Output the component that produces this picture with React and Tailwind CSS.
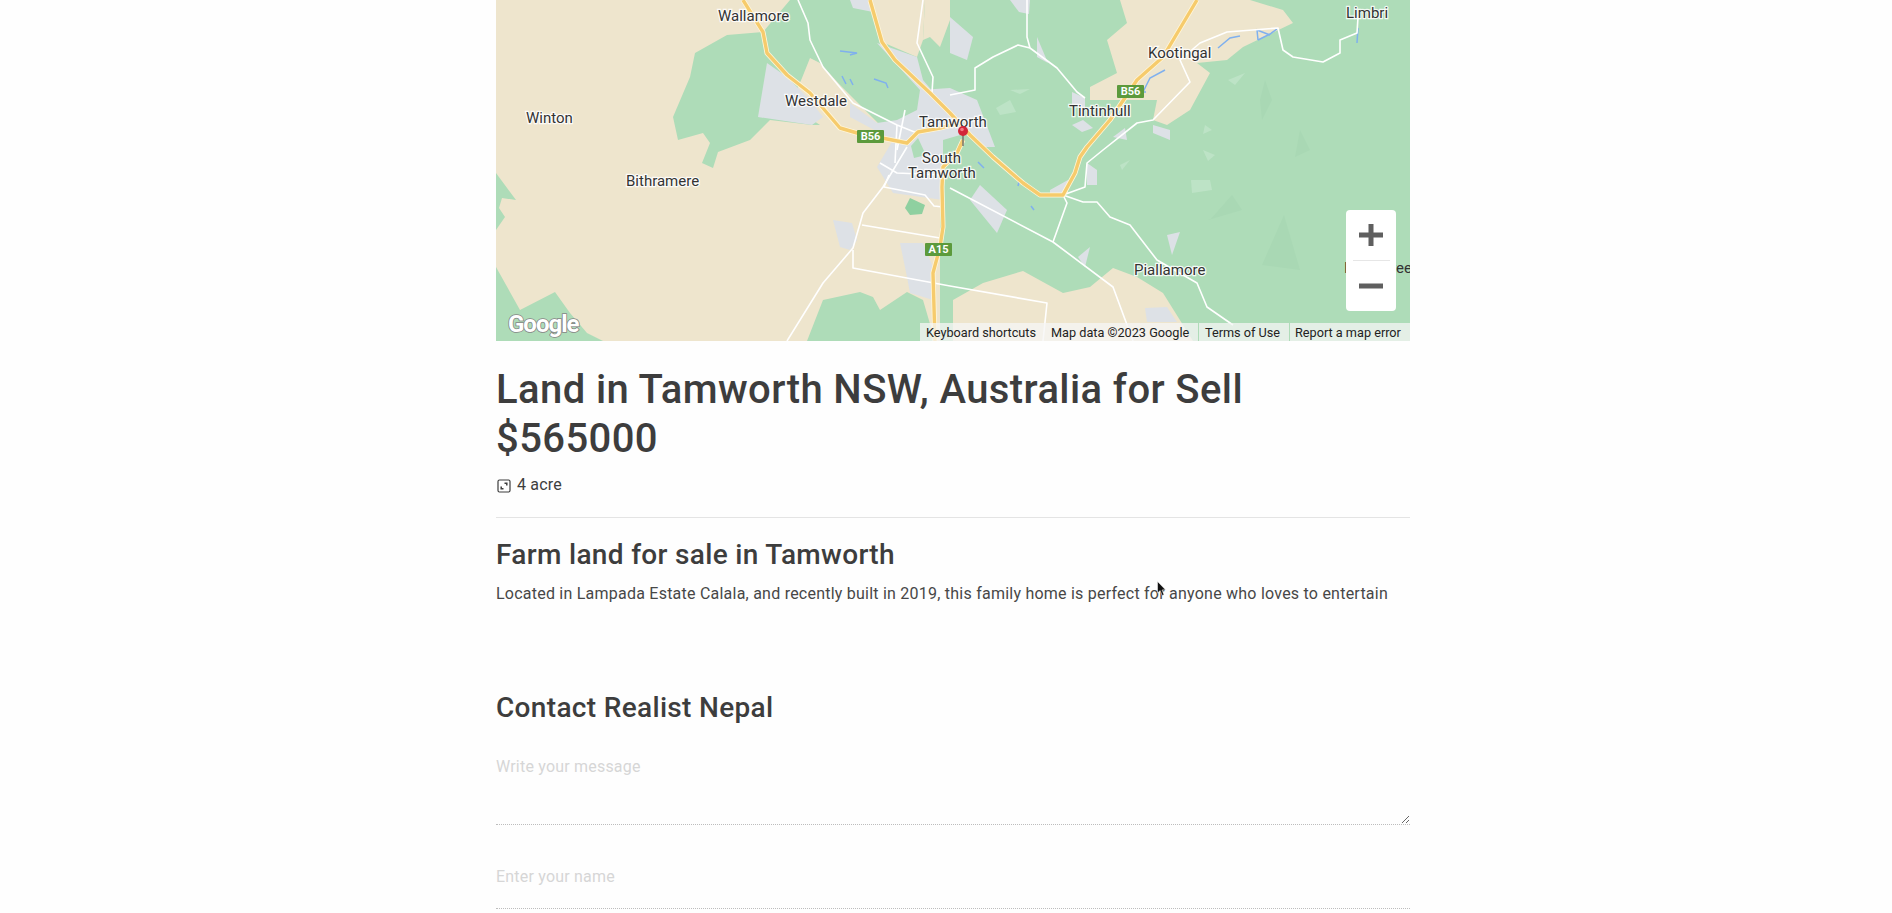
import React from 'react';

const FONT = { fontFamily: 'Roboto, sans-serif' };

const GREEN = [
  '790,0 763,32 727,35 695,53 690,77 673,117 678,140 703,133 710,143 702,163 713,168 718,152 750,140 770,120 812,125 897,125 940,130 940,341 1410,341 1410,0',
  '496,173 516,200 502,198 499,208 505,217 496,230',
  '496,267 520,310 555,292 570,313 587,333 603,341 496,341',
  '807,341 823,300 860,292 873,297 880,310 907,292 923,300 935,341',
];

const TAN = [
  '802,78 810,58 820,63 840,85 865,110 880,125 820,125 790,105',
  '870,0 882,42 917,57 923,40 925,0',
  '925,0 923,40 930,37 940,47 950,20 950,0',
  '1120,0 1127,23 1107,40 1117,73 1090,87 1090,100 1157,100 1153,120 1167,125 1190,110 1210,73 1197,63 1227,60 1243,47 1293,23 1283,10 1250,0',
  '953,341 953,300 983,283 1023,271 1063,293 1090,287 1113,268 1137,277 1163,293 1193,341',
];

const URBAN = [
  '850,103 877,123 897,120 917,110 920,90 950,88 977,100 995,147 983,147 967,133 943,140 943,200 893,193 877,167 893,140 850,117',
  '767,63 758,117 812,125 823,117 810,100 787,77',
  '833,220 852,223 857,240 850,250 840,247',
  '900,243 923,243 933,267 933,300 910,293 907,277',
  '850,0 870,0 873,12 853,8',
  '877,43 917,57 923,80 940,100 920,90',
  '950,17 973,37 967,60 950,53',
  '1010,0 1030,0 1029,14 1019,12',
  '970,200 980,185 1007,210 997,233',
  '1087,163 1097,170 1097,185 1087,185',
  '1153,125 1170,130 1170,140 1153,133',
  '1072,92 1085,98 1085,108 1072,105',
  '1072,125 1083,120 1093,128 1082,132',
  '1037,37 1048,63 1037,57',
  '1167,235 1180,232 1172,255',
  '1078,257 1090,247 1085,267',
  '1145,308 1167,307 1177,322 1147,322',
  '1113,137 1125,128 1127,140',
  '1050,190 1068,180 1068,193 1050,193',
];

const PALE = [
  '1010,90 1030,89 1020,94',
  '996,108 1010,100 1016,112 1000,115',
  '1205,125 1212,130 1203,134',
  '1203,150 1215,155 1208,161',
  '1120,165 1130,160 1122,170',
  '1191,180 1210,180 1212,190 1192,193',
  '1228,80 1245,73 1235,85',
];

const DARK = [
  '1265,80 1272,100 1262,120 1260,100',
  '1300,270 1284,215 1262,265',
  '1300,130 1310,150 1295,157',
  '1210,220 1232,195 1242,210 1208,220',
];

const WATER = [
  'M840 51 L857 53 L850 55',
  'M842 76 L846 84 M850 79 L853 85',
  'M874 79 L886 83 L888 88',
  'M1143 92 L1150 78 L1165 70',
  'M1146 92 L1128 92',
  'M1258 40 L1270 34 L1277 29',
  'M1258 40 L1257 30 L1270 35',
  'M1218 48 L1230 38 L1240 36',
  'M1357 43 L1358 28',
  'M1020 178 L1018 186',
  'M1034 210 L1031 206',
  'M978 162 L984 168',
];

const WHITE_ROADS = [
  'M787 341 L823 283 L853 248 L863 213 L883 187 L907 147',
  'M798 0 L808 23 L810 40 L823 67 L853 103 L897 125 L917 133',
  'M862 225 L940 238',
  'M853 250 L853 268 L950 286 L1047 303 L1043 341',
  'M950 188 L1053 242 L1113 287 L1133 341',
  'M1053 242 L1067 203 L1063 195',
  'M1063 195 L1083 202 L1097 202 L1110 217 L1130 225 L1157 260 L1197 283 L1207 307 L1233 325',
  'M1063 195 L1085 187 L1087 163 L1103 150 L1137 123 L1153 120 L1190 82 L1180 60 L1200 43 L1227 32 L1278 28 L1283 50 L1293 57 L1323 62 L1340 53 L1340 40 L1357 33 L1358 17',
  'M1027 0 L1027 37 L1030 48 L1018 45 L993 57 L975 68 L975 90 L950 95',
  'M1030 48 L1057 68 L1077 92 L1085 98',
  'M923 0 L917 43 L933 77 L932 93',
  'M880 163 L897 173 L943 175',
  'M889 175 L884 187 L925 195 L934 206 L943 207',
  'M905 110 L897 150',
  'M897 125 L895 163',
];

const YELLOW_ROADS = [
  'M743 0 L763 32 L767 53 L787 75 L810 93 L840 128 L857 133 L907 143 L918 132 L940 128 L963 122',
  'M870 0 L882 42 L895 60 L930 93 L950 113 L970 135 L993 157 L1023 183 L1040 195 L1063 195 L1075 173 L1080 157 L1087 147 L1110 120 L1137 80 L1163 57 L1197 0',
  'M963 140 L957 153 L943 167 L942 187 L943 227 L940 247 L933 273 L935 341',
];

// labels sit at x, baseline y, all in page coordinates
const LABELS = [
  ['Wallamore', 718, 21],
  ['Westdale', 785, 106],
  ['Winton', 526, 123],
  ['Bithramere', 626, 186],
  ['Tamworth', 919, 127],
  ['South', 922, 163],
  ['Tamworth', 908, 178],
  ['Kootingal', 1148, 58],
  ['Tintinhull', 1069, 116],
  ['Limbri', 1346, 18],
  ['Piallamore', 1134, 275],
];

const SHIELDS = [
  ['B56', 857, 130, 27],
  ['A15', 925, 243, 27],
  ['B56', 1117, 85, 27],
];

const MapArt = () => (
  <svg viewBox="496 0 914 341" className="block w-[914px] h-[341px]" style={FONT}>
    <rect x="496" y="0" width="914" height="341" fill="#eee5cd" />
    {GREEN.map((p) => <polygon key={p} points={p} fill="#aedcb8" />)}
    {TAN.map((p) => <polygon key={p} points={p} fill="#eee5cd" />)}
    {URBAN.map((p) => <polygon key={p} points={p} fill="#dde1e6" />)}
    {PALE.map((p) => <polygon key={p} points={p} fill="#bde3c6" />)}
    {DARK.map((p) => <polygon key={p} points={p} fill="#a9d8b4" />)}
    <polygon points="911,146 918,138 926,155 914,158" fill="#aedcb8" />
    <polygon points="910,198 925,205 922,214 910,215 905,208" fill="#8fd0a0" />
    {WATER.map((d) => <path key={d} d={d} fill="none" stroke="#7fb0ee" strokeWidth="1.5" />)}
    {WHITE_ROADS.map((d) => <path key={d} d={d} fill="none" stroke="#ffffff" strokeWidth="1.6" strokeLinejoin="round" />)}
    {YELLOW_ROADS.map((d) => <path key={d} d={d} fill="none" stroke="#fff6d8" strokeWidth="5" strokeLinejoin="round" />)}
    {YELLOW_ROADS.map((d) => <path key={d} d={d} fill="none" stroke="#f6cb6c" strokeWidth="3.4" strokeLinejoin="round" />)}
    {SHIELDS.map(([t, x, y, w]) => (
      <g key={t + x}>
        <rect x={x} y={y} width={w} height={13} fill="#5c9a3c" rx="1" />
        <text x={x + w / 2} y={y + 10} textAnchor="middle" fontSize="11" fontWeight="700" fill="#ffffff">{t}</text>
      </g>
    ))}
    {LABELS.map(([t, x, y]) => (
      <text key={t + x} x={x} y={y} fontSize="15" fill="#333333" stroke="#ffffff" strokeWidth="2.5" strokeOpacity="0.85" paintOrder="stroke">{t}</text>
    ))}
    <text x="1344" y="273" fontSize="15" fill="#333333">I</text>
    <text x="1391" y="273" fontSize="15" fill="#333333">ree</text>
    <path d="M963 133 L963 146" stroke="#77736c" strokeWidth="1.5" />
    <circle cx="963" cy="131" r="5" fill="#d3263a" />
    <circle cx="962" cy="129.5" r="1.8" fill="#f27a85" />
    <text x="508" y="332" fontSize="24" fontWeight="700" fill="#ffffff" stroke="#858585" strokeWidth="1.6" letterSpacing="-1" paintOrder="stroke">Google</text>
  </svg>
);

const MapFooter = () => (
  <div className="absolute bottom-0 right-0 flex h-[18px] text-[12.7px] leading-[19px] text-[#222]" style={FONT}>
    <span className="w-[116px] pl-[6px] bg-[#f5f5f5]/75 whitespace-nowrap">Keyboard shortcuts</span>
    <span className="w-[162px] pl-[15px] bg-[#f5f5f5]/75 whitespace-nowrap">Map data ©2023 Google</span>
    <span className="w-[90px] ml-px pl-[6px] bg-[#f5f5f5]/75 whitespace-nowrap">Terms of Use</span>
    <span className="w-[120px] ml-px pl-[5px] bg-[#f5f5f5]/75 whitespace-nowrap">Report a map error</span>
  </div>
);

const ZoomControl = () => (
  <div className="absolute left-[850px] top-[210px] w-[50px] h-[101px] bg-white rounded-sm flex flex-col items-center">
    <div className="h-[50px] w-full flex items-center justify-center">
      <svg width="24" height="24" viewBox="0 0 24 24"><path d="M0 12h24M12 1v22" stroke="#5f5f5f" strokeWidth="5" fill="none" /></svg>
    </div>
    <div className="h-px w-[37px] bg-[#e6e6e6]" />
    <div className="h-[50px] w-full flex items-center justify-center">
      <svg width="24" height="24" viewBox="0 0 24 24"><path d="M0 12h24" stroke="#5f5f5f" strokeWidth="5" fill="none" /></svg>
    </div>
  </div>
);

const AreaIcon = () => (
  <svg width="14" height="14" viewBox="0 0 14 14" fill="none" stroke="#3d3d3d" className="shrink-0 ml-px mt-px">
    <rect x="1" y="1" width="12" height="12" rx="1.5" strokeWidth="1.2" />
    <path d="M4.2 7.5v2.3h2.3M9.8 6.5V4.2H7.5" strokeWidth="1.5" />
  </svg>
);

const App = () => {
  return (
    <div className="h-screen overflow-hidden bg-[#fefefe] text-[#3d3d3d] relative" style={FONT}>
      <div className="w-[914px] ml-[496px]">
        <div className="relative h-[341px] overflow-hidden">
          <MapArt />
          <MapFooter />
          <ZoomControl />
        </div>

        <h1 className="mt-[25px] text-[40px] leading-[48.5px] font-medium tracking-[0.4px]">
          Land in Tamworth NSW, Australia for Sell
          <br />
          $565000
        </h1>
        <div className="mt-[10px] flex items-center gap-[6px] text-base leading-6 tracking-[0.2px]">
          <AreaIcon />
          <span>4 acre</span>
        </div>
        <hr className="mt-5 border-t border-[#e4e4e4]" />

        <h2 className="mt-[19px] text-[28px] leading-9 font-medium tracking-[0.33px]">Farm land for sale in Tamworth</h2>
        <p className="mt-[9px] text-base leading-6 tracking-[0.23px] text-[#474747]">
          Located in Lampada Estate Calala, and recently built in 2019, this family home is perfect for anyone who loves to entertain
        </p>

        <h2 className="mt-[84px] text-[28px] leading-9 font-medium tracking-[0.33px]">Contact Realist Nepal</h2>
        <form className="mt-[29px]">
          <textarea
            placeholder="Write your message"
            className="block w-full h-[70px] text-base leading-6 tracking-[0.2px] border-b border-dotted border-[#bdbdbd] outline-none placeholder:text-[#d6d6d6]"
          />
          <input
            placeholder="Enter your name"
            className="block w-full mt-[20px] h-[64px] text-base leading-6 tracking-[0.2px] border-b border-dotted border-[#bdbdbd] outline-none placeholder:text-[#d6d6d6]"
          />
        </form>
      </div>

      {/* mouse pointer from the capture */}
      <svg className="absolute left-[1157px] top-[581px]" width="10" height="16" viewBox="0 0 10 16">
        <path d="M0.5 0.5 L0.5 12 L3.2 9.6 L5.2 14.5 L7 13.7 L5 9 L8.5 8.8 Z" fill="#111" stroke="#fff" strokeWidth="0.5" />
      </svg>
    </div>
  );
};

export default App;
